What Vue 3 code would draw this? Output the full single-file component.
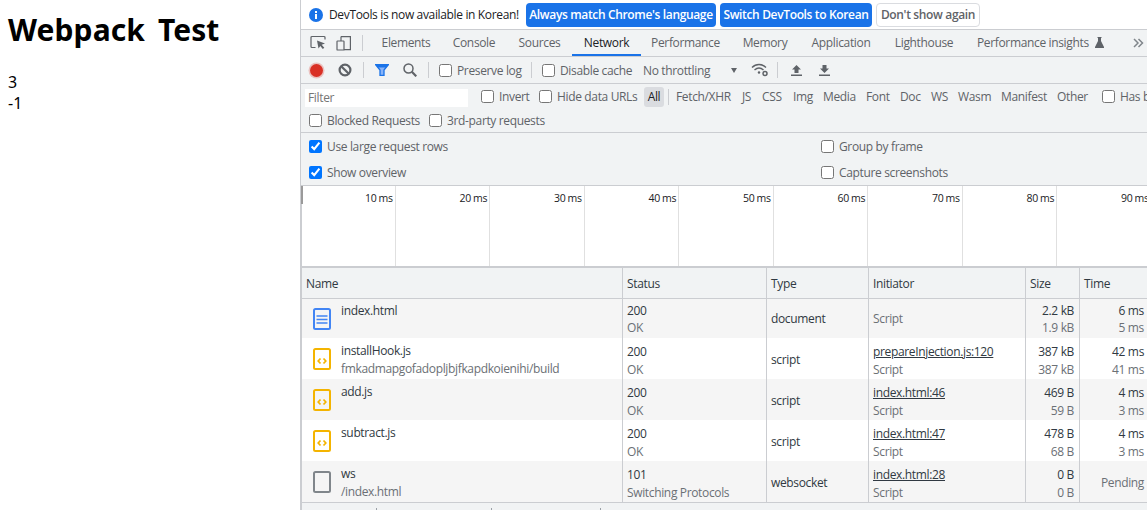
<script setup>
const tabs = [
  { name: 'Elements', w: 70 },
  { name: 'Console', w: 66 },
  { name: 'Sources', w: 65 },
  { name: 'Network', w: 69, active: true },
  { name: 'Performance', w: 89 },
  { name: 'Memory', w: 70 },
  { name: 'Application', w: 82 },
  { name: 'Lighthouse', w: 84 }
]
const types = [
  { t: 'Fetch/XHR', w: 66 }, { t: 'JS', w: 20 }, { t: 'CSS', w: 31 }, { t: 'Img', w: 30 },
  { t: 'Media', w: 43 }, { t: 'Font', w: 34 }, { t: 'Doc', w: 31 }, { t: 'WS', w: 27 },
  { t: 'Wasm', w: 43 }, { t: 'Manifest', w: 56 }, { t: 'Other', w: 45 }
]
const ticks = [10, 20, 30, 40, 50, 60, 70, 80, 90]
const rows = [
  { icon: 'doc', name: 'index.html', sub: '', s1: '200', s2: 'OK', type: 'document', link: '', init: 'Script', z1: '2.2 kB', z2: '1.9 kB', t1: '6 ms', t2: '5 ms' },
  { icon: 'js', name: 'installHook.js', sub: 'fmkadmapgofadopljbjfkapdkoienihi/build', s1: '200', s2: 'OK', type: 'script', link: 'prepareInjection.js:120', init: 'Script', z1: '387 kB', z2: '387 kB', t1: '42 ms', t2: '41 ms' },
  { icon: 'js', name: 'add.js', sub: '', s1: '200', s2: 'OK', type: 'script', link: 'index.html:46', init: 'Script', z1: '469 B', z2: '59 B', t1: '4 ms', t2: '3 ms' },
  { icon: 'js', name: 'subtract.js', sub: '', s1: '200', s2: 'OK', type: 'script', link: 'index.html:47', init: 'Script', z1: '478 B', z2: '68 B', t1: '4 ms', t2: '3 ms' },
  { icon: 'ws', name: 'ws', sub: '/index.html', s1: '101', s2: 'Switching Protocols', type: 'websocket', link: 'index.html:28', init: 'Script', z1: '0 B', z2: '0 B', t1: 'Pending', t2: '' }
]
</script>

<template>
  <div class="page">
    <main class="content">
      <h1>Webpack Test</h1>
      <div class="num">3</div>
      <div class="num">-1</div>
    </main>

    <section class="devtools">
      <div class="infobar">
        <svg class="info" width="14" height="14" viewBox="0 0 14 14">
          <circle cx="7" cy="7" r="7" fill="#1a73e8" />
          <rect x="6" y="6" width="2" height="5" fill="#fff" />
          <rect x="6" y="3" width="2" height="2" fill="#fff" />
        </svg>
        <span class="info-text">DevTools is now available in Korean!</span>
        <button class="btn primary b1">Always match Chrome's language</button>
        <button class="btn primary b2">Switch DevTools to Korean</button>
        <button class="btn plain b3">Don't show again</button>
      </div>

      <div class="tabbar">
        <svg class="ic first" width="16" height="16" viewBox="0 0 16 16" fill="none">
          <path d="M15 4.500V2.500A1 1 0 0 0 14 1.500H2A1 1 0 0 0 1 2.500v9a1 1 0 0 0 1 1h3.500" stroke="#5f6368" stroke-width="1.200" />
          <path d="M7 5.500l8 3-3.300 1.200 2.600 3-1.500 1.300-2.500-3L8.500 13.500z" fill="#5f6368" />
        </svg>
        <svg class="ic second" width="16" height="16" viewBox="0 0 16 16" fill="none" stroke="#5f6368" stroke-width="1.200">
          <rect x="1" y="6" width="7" height="9" rx=".6" />
          <path d="M5 1.600h9.400v13H8" />
          <path d="M5 1.600v4.400" />
        </svg>
        <span class="sep tabsep"></span>
        <span
          v-for="t in tabs"
          :key="t.name"
          class="tab"
          :class="{ active: t.active }"
          :style="{ width: t.w + 'px' }"
        >{{ t.name }}</span>
        <span class="tab insights">Performance insights
          <svg width="9" height="11" viewBox="0 0 9 11"><path d="M2.500 0h4v1H6v3l3 6v1H0v-1l3-6V1h-.5z" fill="#5f6368" /></svg>
        </span>
        <svg class="more" width="12" height="12" viewBox="0 0 12 12" fill="none" stroke="#80868b" stroke-width="1.500">
          <path d="M2 2l4 4-4 4M6.500 2l4 4-4 4" />
        </svg>
      </div>

      <div class="toolbar">
        <span class="record"></span>
        <svg class="clear" width="14" height="14" viewBox="0 0 14 14" fill="none" stroke="#5f6368" stroke-width="2.200">
          <circle cx="7" cy="7" r="5.400" />
          <path d="M3.200 3.200l7.600 7.600" />
        </svg>
        <span class="sep s1"></span>
        <svg class="funnel" width="14" height="12" viewBox="0 0 14 12">
          <path d="M.5.500h13L9 6v5.500H5V6z" fill="#8ab4f8" />
          <path d="M.5.500h13L9 6v5.500H5V6z" fill="none" stroke="#1a73e8" stroke-width="1.300" />
          <path d="M1 1h12L11 3.500H3z" fill="#1a73e8" />
        </svg>
        <svg class="search" width="14" height="14" viewBox="0 0 14 14" fill="none" stroke="#5f6368" stroke-width="1.500">
          <circle cx="5.500" cy="5.500" r="4.500" />
          <path d="M8.800 8.800l4.500 4.500" stroke-width="2.200" />
        </svg>
        <span class="sep s2"></span>
        <label class="check cb-preserve"><input type="checkbox" />Preserve log</label>
        <span class="sep s3"></span>
        <label class="check cb-cache"><input type="checkbox" />Disable cache</label>
        <span class="throttle">No throttling</span>
        <span class="caret"></span>
        <svg class="wifi" width="18" height="14" viewBox="0 0 18 14" fill="none" stroke="#5f6368" stroke-width="1.400">
          <path d="M1 4.500C5 .5 11 .5 15 4.500M3.500 7c2.700-2.500 6.300-2.500 9 0" />
          <circle cx="8" cy="9.500" r="1.200" fill="#5f6368" stroke="none" />
          <circle cx="14" cy="10.500" r="2" stroke-width="1.500" />
        </svg>
        <span class="sep s4"></span>
        <svg class="up" width="11" height="11" viewBox="0 0 11 11">
          <path d="M5.500 0l4.500 4.500H7.500V8h-4V4.500H1zM0 9.500h11V11H0z" fill="#5f6368" />
        </svg>
        <svg class="down" width="11" height="11" viewBox="0 0 11 11">
          <path d="M3.500 0h4v3.500H10L5.500 8 1 3.500h2.500zM0 9.500h11V11H0z" fill="#5f6368" />
        </svg>
      </div>

      <div class="filters">
        <div class="filter-line">
          <span class="filter-input">Filter</span>
          <label class="check cb-invert"><input type="checkbox" />Invert</label>
          <label class="check cb-hide"><input type="checkbox" />Hide data URLs</label>
          <span class="chip">All</span>
          <span class="sep s5"></span>
          <span v-for="x in types" :key="x.t" class="type" :style="{ width: x.w + 'px' }">{{ x.t }}</span>
          <label class="check cb-has"><input type="checkbox" />Has blocked cookies</label>
        </div>
        <div class="blocked-line">
          <label class="check cb-blocked"><input type="checkbox" />Blocked Requests</label>
          <label class="check cb-third"><input type="checkbox" />3rd-party requests</label>
        </div>
      </div>

      <div class="settings">
        <label class="check"><input type="checkbox" checked />Use large request rows</label>
        <label class="check"><input type="checkbox" />Group by frame</label>
        <label class="check"><input type="checkbox" checked />Show overview</label>
        <label class="check"><input type="checkbox" />Capture screenshots</label>
      </div>

      <div class="overview">
        <div v-for="k in ticks" :key="k" class="tick">{{ k }} ms</div>
        <span class="marker"></span>
      </div>

      <div class="table">
        <div class="grid head">
          <div class="cell">Name</div>
          <div class="cell">Status</div>
          <div class="cell">Type</div>
          <div class="cell">Initiator</div>
          <div class="cell">Size</div>
          <div class="cell">Time</div>
        </div>
        <div v-for="(r, i) in rows" :key="r.name" class="grid row" :class="{ odd: i % 2 === 0, short: i === 0 }">
          <div class="cell namecell">
            <svg v-if="r.icon === 'doc'" class="file" width="18" height="22" viewBox="0 0 18 22" fill="none">
              <rect x="1" y="1" width="16" height="20" rx="1.500" stroke="#4285f4" stroke-width="2" />
              <path d="M3.500 8h11M3.500 11.500h11M3.500 15h11" stroke="#4285f4" stroke-width="1.600" />
            </svg>
            <svg v-else-if="r.icon === 'js'" class="file" width="18" height="22" viewBox="0 0 18 22" fill="none">
              <rect x="1" y="1" width="16" height="20" rx="1.500" stroke="#f4b400" stroke-width="2" />
              <path d="M7.500 10.500L5.200 13l2.300 2.500M10.500 10.500L12.800 13l-2.300 2.500" stroke="#f4b400" stroke-width="1.700" />
            </svg>
            <svg v-else class="file" width="18" height="22" viewBox="0 0 18 22" fill="none">
              <rect x="1" y="1" width="16" height="20" rx="1.500" stroke="#80868b" stroke-width="2" />
            </svg>
            <div class="stack">
              <div class="dark">{{ r.name }}</div>
              <div class="gray">{{ r.sub }}</div>
            </div>
          </div>
          <div class="cell stack">
            <div class="dark">{{ r.s1 }}</div>
            <div class="gray">{{ r.s2 }}</div>
          </div>
          <div class="cell mid dark">{{ r.type }}</div>
          <div class="cell" :class="r.link ? 'stack' : 'mid'">
            <a v-if="r.link" class="dark link">{{ r.link }}</a>
            <div class="gray">{{ r.init }}</div>
          </div>
          <div class="cell stack right">
            <div class="dark">{{ r.z1 }}</div>
            <div class="gray">{{ r.z2 }}</div>
          </div>
          <div class="cell right" :class="r.t2 ? 'stack' : 'mid gray'">
            <div :class="r.t2 ? 'dark' : ''">{{ r.t1 }}</div>
            <div v-if="r.t2" class="gray">{{ r.t2 }}</div>
          </div>
        </div>
      </div>
      <div class="status">
        <span class="stat-a"></span><span class="stat-b"></span><span class="stat-c"></span>
      </div>
    </section>
  </div>
</template>

<style>
html, body { margin: 0; background: #fff; overflow: hidden; }
</style>

<style scoped>
.page {
  display: flex;
  width: 1147px;
  height: 510px;
  overflow: hidden;
  background: #fff;
}
.content {
  flex: 0 0 300px;
  box-sizing: border-box;
  padding: 0 8px;
  font-family: "Noto Sans", sans-serif;
  color: #000;
}
h1 {
  margin: 9px 0 21px;
  font-size: 30px;
  line-height: 42px;
  font-weight: 700;
  letter-spacing: 0.1px;
  word-spacing: 5px;
}
.num { font-size: 16px; line-height: 21px; }

.devtools {
  flex: 0 0 847px;
  box-sizing: border-box;
  border-left: 1px solid #cbcdd1;
  display: flex;
  flex-direction: column;
  font-family: "Open Sans", sans-serif;
  font-size: 12px;
  letter-spacing: -0.35px;
  color: #5f6368;
  background: #f1f3f4;
  overflow: hidden;
}
.devtools > * { flex: none; }
.infobar {
  height: 29px;
  background: #fff;
  border-bottom: 1px solid #cbcdd1;
  display: flex;
  align-items: center;
  white-space: nowrap;
}
.info { margin-left: 8px; }
.info-text { margin-left: 6px; width: 197px; color: #202124; }
.btn {
  height: 24px;
  padding: 0;
  border-radius: 4px;
  font: 600 12px "Open Sans", sans-serif;
  letter-spacing: -0.35px;
  box-sizing: border-box;
  white-space: nowrap;
}
.primary { background: #1a73e8; color: #fff; border: 0; }
.b1 { width: 190px; }
.b2 { width: 152px; margin-left: 4px; }
.b3 { width: 104px; margin-left: 4px; background: #fff; border: 1px solid #dadce0; color: #5f6368; }

.tabbar {
  height: 26px;
  border-bottom: 1px solid #cbcdd1;
  display: flex;
  align-items: center;
  white-space: nowrap;
}
.ic.first { margin-left: 9px; }
.ic.second { margin-left: 10px; }
.sep { width: 1px; height: 16px; background: #cbcdd1; flex: none; }
.tabsep { margin: 0 8px 0 10px; }
.tab {
  height: 26px;
  line-height: 26px;
  text-align: center;
  flex: none;
}
.tab.active {
  box-sizing: border-box;
  border-bottom: 2px solid #1a73e8;
  color: #202124;
}
.insights { margin-left: 1px; text-align: left; padding-left: 10px; width: 135px; box-sizing: border-box; }
.insights svg { margin-left: 3px; vertical-align: -0.5px; }
.more { margin-left: 30px; }

.toolbar {
  height: 26px;
  border-bottom: 1px solid #cbcdd1;
  display: flex;
  align-items: center;
  white-space: nowrap;
}
.record {
  width: 13px;
  height: 13px;
  margin-left: 9px;
  border-radius: 50%;
  background: #d93025;
  box-shadow: 0 0 0 1.500px rgba(217, 48, 37, .25);
}
.clear { margin-left: 15px; }
.s1 { margin-left: 11px; }
.funnel { margin-left: 11px; }
.search { margin-left: 14px; }
.s2 { margin-left: 11px; }
.check {
  display: inline-flex;
  align-items: center;
  flex: none;
  white-space: nowrap;
}
.check input {
  width: 13px;
  height: 13px;
  margin: 0 5px 0 0;
  flex: none;
}
.cb-preserve { margin-left: 10px; width: 92px; }
.s3 { margin-left: 0; }
.cb-cache { margin-left: 10px; width: 91px; }
.throttle { margin-left: 10px; width: 88px; flex: none; }
.caret {
  width: 0;
  height: 0;
  border-left: 3.500px solid transparent;
  border-right: 3.500px solid transparent;
  border-top: 5px solid #5f6368;
}
.wifi { margin-left: 14px; }
.s4 { margin-left: 8px; }
.up { margin-left: 13px; }
.down { margin-left: 17px; }

.filters {
  height: 48px;
  border-bottom: 1px solid #cbcdd1;
  white-space: nowrap;
}
.filter-line {
  height: 25px;
  display: flex;
  align-items: center;
}
.filter-input {
  width: 163px;
  height: 18px;
  margin: 2px 0 0 4px;
  line-height: 18px;
  background: #fff;
  box-sizing: border-box;
  padding-left: 3px;
  color: #757575;
  flex: none;
}
.cb-invert { margin-left: 13px; width: 58px; }
.cb-hide { width: 105px; }
.chip {
  width: 20px;
  height: 20px;
  line-height: 20px;
  text-align: center;
  background: #dadce0;
  border-radius: 3px;
  color: #202124;
  flex: none;
}
.s5 { margin: 0 7px 0 4px; }
.type { flex: none; }
.cb-has { margin-left: 0; }
.blocked-line {
  height: 23px;
  display: flex;
  align-items: center;
  padding-left: 8px;
}
.cb-blocked { width: 120px; }

.settings {
  height: 52px;
  border-bottom: 1px solid #cbcdd1;
  box-sizing: content-box;
  padding-left: 8px;
  display: grid;
  grid-template-columns: 512px 1fr;
  grid-auto-rows: 26px;
  align-items: center;
}

.overview {
  position: relative;
  height: 80px;
  border-bottom: 2px solid #cbcdd1;
  background: #fff;
  display: flex;
  color: #202124;
  box-shadow: inset 1px 0 #cbcdd1;
}
.tick {
  flex: none;
  width: 94.500px;
  box-sizing: border-box;
  border-right: 1px solid #e0e0e0;
  text-align: right;
  padding: 5px 2px 0 0;
  font-size: 10.500px;
  line-height: 14px;
  letter-spacing: -0.4px;
}
.marker {
  position: absolute;
  left: 0;
  top: 0;
  width: 2px;
  height: 18px;
  background: #9a9a9a;
}

.table { position: relative; }
.table::before {
  content: "";
  position: absolute;
  z-index: 1;
  left: 0;
  top: 0;
  bottom: 0;
  width: 1px;
  background: #cbcdd1;
}
.grid {
  display: grid;
  grid-template-columns: 322px 144px 102px 157px 54px 68px;
}
.head {
  height: 30px;
  background: #f1f3f4;
  border-bottom: 1px solid #cbcdd1;
  color: #303942;
}
.head .cell { line-height: 32px; color: #303942; }
.row { height: 41px; background: #fff; }
.row.short { height: 39px; }
.row.odd { background: #f5f5f5; }
.cell {
  box-sizing: border-box;
  padding: 0 4px;
  border-right: 1px solid #cbcdd1;
  white-space: nowrap;
  overflow: hidden;
}
.cell:first-child { padding-left: 5px; }
.cell:last-child { border-right: 0; }
.stack {
  display: flex;
  flex-direction: column;
  justify-content: center;
  padding-top: 4px;
  line-height: 18px;
}
.short .stack { padding-top: 0; line-height: 17px; }
.mid { display: flex; align-items: center; padding-top: 1px; }
.short .mid { padding-top: 0; }
.right { text-align: right; align-items: flex-end; padding-right: 4px; }
.mid.right { justify-content: flex-end; align-items: center; }
.stack.right { padding-right: 5px; }
.cell:last-child.stack.right { padding-right: 4px; }
.namecell {
  display: flex;
  align-items: center;
  padding-left: 12px !important;
}
.namecell .stack { margin-left: 10px; min-height: 36px; justify-content: flex-start; padding-top: 2px; }
.short .namecell .stack { padding-top: 3px; line-height: 18px; }
.file { flex: none; }
.dark { color: #303942; }
.gray { color: #6b7075; min-height: 17px; }
.link { text-decoration: underline; display: block; }

.status {
  height: 7px;
  border-top: 1px solid #cbcdd1;
  position: relative;
  background: #f1f3f4;
  box-shadow: inset 1px 0 #cbcdd1;
}
.status span {
  position: absolute;
  top: 5px;
  width: 1px;
  height: 4px;
  background: #9aa0a6;
}
.stat-a { left: 75px; }
.stat-b { left: 190px; }
.stat-c { left: 299px; }
</style>
